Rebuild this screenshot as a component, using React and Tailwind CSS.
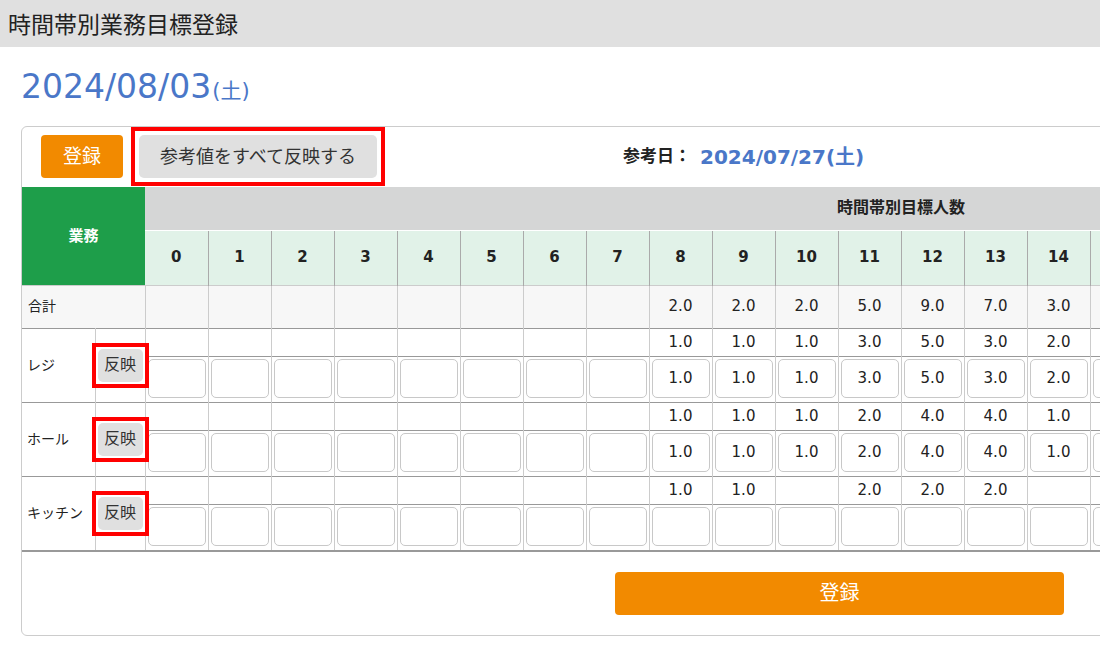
import React from 'react';

const HOURS = Array.from({ length: 24 }, (_, i) => i);

const totals = { 8: '2.0', 9: '2.0', 10: '2.0', 11: '5.0', 12: '9.0', 13: '7.0', 14: '3.0' };

const tasks = [
  {
    name: 'レジ',
    ref: { 8: '1.0', 9: '1.0', 10: '1.0', 11: '3.0', 12: '5.0', 13: '3.0', 14: '2.0' },
    val: { 8: '1.0', 9: '1.0', 10: '1.0', 11: '3.0', 12: '5.0', 13: '3.0', 14: '2.0' },
  },
  {
    name: 'ホール',
    ref: { 8: '1.0', 9: '1.0', 10: '1.0', 11: '2.0', 12: '4.0', 13: '4.0', 14: '1.0' },
    val: { 8: '1.0', 9: '1.0', 10: '1.0', 11: '2.0', 12: '4.0', 13: '4.0', 14: '1.0' },
  },
  {
    name: 'キッチン',
    ref: { 8: '1.0', 9: '1.0', 11: '2.0', 12: '2.0', 13: '2.0' },
    val: {},
  },
];

const TaskRows = ({ task, last }) => {
  const bottom = last ? 'border-b-2 border-b-[#999]' : '';
  return (
    <>
      <tr className="h-[28px]">
        <td rowSpan={2} className={`p-0 pl-[5px] text-[14px] border-t border-t-[#999] border-r border-r-[#ccc] ${bottom}`}>
          {task.name}
        </td>
        <td rowSpan={2} className={`p-0 border-t border-t-[#999] ${bottom}`}>
          <div className="flex items-center justify-center w-full">
            {/* highlighted reflect button */}
            <div className="relative z-10 shrink-0 border-[4px] border-[#ff0000] p-[2px]">
              <button className="w-[45px] h-[33px] bg-[#e0e0e0] rounded-[5px] text-[16px] text-[#333] flex items-center justify-center">
                反映
              </button>
            </div>
          </div>
        </td>
        {HOURS.map((h) => (
          <td key={h} className="p-0 text-center text-[15px] border-t border-t-[#999] border-l border-l-[#ccc]">
            {task.ref[h] || ''}
          </td>
        ))}
      </tr>
      <tr className="h-[46px]">
        {HOURS.map((h) => (
          <td key={h} className={`p-0 pt-[2px] px-[2px] pb-[4px] align-top border-t border-t-[#999] border-l border-l-[#ccc] ${bottom}`}>
            <div className="h-[39px] rounded-[5px] border border-[#c8c8c8] flex items-center justify-center text-[15px]">
              {task.val[h] || ''}
            </div>
          </td>
        ))}
      </tr>
    </>
  );
};

export default function App() {
  return (
    <div className="w-[1100px] h-[652px] overflow-hidden bg-white text-[#222] font-['DejaVu_Sans','Noto_Sans_CJK_JP',sans-serif]">
      {/* Title bar */}
      <div className="h-[47px] bg-[#e0e0e0] flex items-center pl-[8px] text-[23px] font-['Noto_Sans_CJK_JP',sans-serif]">
        時間帯別業務目標登録
      </div>

      {/* Date */}
      <div className="h-[79px] pl-[21px] pt-[23px] flex items-baseline text-[#4a77c8] leading-none">
        <span className="text-[33px]">2024/08/03</span>
        <span className="text-[21px] ml-[1px]">(土)</span>
      </div>

      {/* Card */}
      <div className="ml-[21px] w-[1637px] border border-[#ccc] rounded-[6px]">
        <div className="h-[60px] flex items-start pl-[19px]">
          <button className="mt-[8px] w-[82px] h-[43px] bg-[#f28a00] rounded-[4px] text-white text-[19px] flex items-center justify-center">
            登録
          </button>
          <div className="ml-[8px] border-[4px] border-[#ff0000] p-[4px]">
            <button className="w-[238px] h-[43px] bg-[#e0e0e0] rounded-[5px] text-[18px] text-[#333] flex items-center justify-center">
              参考値をすべて反映する
            </button>
          </div>
          <div className="ml-[238px] h-[60px] flex items-center gap-[9px] font-bold">
            <span className="text-[17px] text-[#222]">参考日：</span>
            <span className="text-[20px] text-[#4a77c8]">2024/07/27(土)</span>
          </div>
        </div>

        <table className="border-collapse table-fixed w-[1635px]">
          <colgroup>
            <col className="w-[73px]" />
            <col className="w-[50px]" />
            {HOURS.map((h) => (
              <col key={h} className="w-[63px]" />
            ))}
          </colgroup>
          <thead>
            <tr className="h-[43px]">
              <th colSpan={2} rowSpan={2} className="p-0 bg-[#1e9e4a] text-white text-[15px] font-bold">
                業務
              </th>
              <th colSpan={24} className="p-0 bg-[#d5d6d6] text-[16px] font-bold">
                時間帯別目標人数
              </th>
            </tr>
            <tr className="h-[55px]">
              {HOURS.map((h, i) => (
                <th
                  key={h}
                  className={`p-0 bg-[#e1f2e8] text-[15px] font-bold border-t border-t-white ${i > 0 ? 'border-l border-l-[#aaa]' : ''}`}
                >
                  {h}
                </th>
              ))}
            </tr>
          </thead>
          <tbody>
            <tr className="h-[43px] bg-[#f7f7f7]">
              <td colSpan={2} className="p-0 pl-[6px] text-[14px] border-t border-t-[#ccc]">
                合計
              </td>
              {HOURS.map((h) => (
                <td key={h} className="p-0 text-center text-[15px] border-t border-t-[#ccc] border-l border-l-[#ccc]">
                  {totals[h] || ''}
                </td>
              ))}
            </tr>
            {tasks.map((t, i) => (
              <TaskRows key={t.name} task={t} last={i === tasks.length - 1} />
            ))}
          </tbody>
        </table>

        <div className="flex justify-center py-[20px]">
          <button className="w-[449px] h-[43px] bg-[#f28a00] rounded-[4px] text-white text-[20px] flex items-center justify-center">
            登録
          </button>
        </div>
      </div>
    </div>
  );
}
